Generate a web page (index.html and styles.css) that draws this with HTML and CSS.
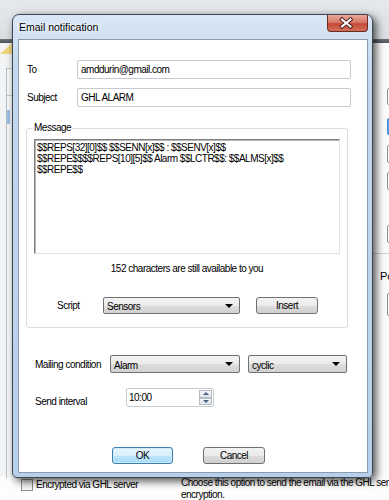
FILE: index.html
```html
<!DOCTYPE html>
<html lang="en">
<head>
    <meta charset="UTF-8">
    <title>Email notification</title>
    <link rel="stylesheet" href="styles.css">
</head>
<body>
    <div class="screen">
        <!-- application behind the dialog -->
        <div class="app">
            <div class="app-top"></div>
            <div class="app-band"></div>
            <div class="app-main">
                <div class="lpane">
                    <span class="tab"></span>
                    <div class="lpanel">
                        <span class="lbox"></span>
                        <span class="lmark"></span>
                    </div>
                </div>
                <div class="rpane">
                    <span class="rbox r1"></span>
                    <span class="rbox blue r2"></span>
                    <span class="rbox r3"></span>
                    <span class="rbox r4"></span>
                    <span class="rbox r5"></span>
                    <span class="rline"></span>
                    <span class="rtext">Po</span>
                    <span class="rbox r6"></span>
                </div>
            </div>
            <div class="app-foot">
                <div class="chk"><span class="chkbox"></span>Encrypted via GHL server</div>
                <div class="hint">Choose this option to send the email via the GHL server with<br>encryption.</div>
            </div>
        </div>

        <!-- the dialog window -->
        <div class="dialog">
            <div class="titlebar">
                <span class="title">Email notification</span>
                <span class="close">
                    <svg width="39" height="16" viewBox="0 0 39 16">
                        <path d="M15 4.5 L23.5 11.5 M23.5 4.5 L15 11.5" stroke="#4a1d18" stroke-width="4" stroke-linecap="square"/>
                        <path d="M15 4.5 L23.5 11.5 M23.5 4.5 L15 11.5" stroke="#fff" stroke-width="2" stroke-linecap="square"/>
                    </svg>
                </span>
            </div>
            <div class="client">
                <div class="field first">
                    <span class="lbl">To</span>
                    <div class="edit">amddurin@gmail.com</div>
                </div>
                <div class="field">
                    <span class="lbl">Subject</span>
                    <div class="edit">GHL ALARM</div>
                </div>

                <fieldset class="group">
                    <legend>Message</legend>
                    <div class="memo">$$REPS[32][0]$$ $$SENN[x]$$ : $$SENV[x]$$<br>$$REPE$$$$REPS[10][5]$$ Alarm $$LCTR$$: $$ALMS[x]$$<br>$$REPE$$</div>
                    <div class="counter">152 characters are still available to you</div>
                    <div class="script-row">
                        <span class="lbl-script">Script</span>
                        <div class="combo w-script"><span>Sensors</span><i class="arrow"></i></div>
                        <span class="btn insert">Insert</span>
                    </div>
                </fieldset>

                <div class="opt-row mail">
                    <span class="lbl-mail">Mailing condition</span>
                    <div class="combo w-alarm"><span>Alarm</span><i class="arrow"></i></div>
                    <div class="combo w-cyclic"><span>cyclic</span><i class="arrow"></i></div>
                </div>
                <div class="opt-row interval">
                    <span class="lbl-int">Send interval</span>
                    <div class="spin">
                        <span class="spin-val">10:00</span>
                        <span class="spin-btns">
                            <span class="sb up"><i></i></span>
                            <span class="sb down"><i></i></span>
                        </span>
                    </div>
                </div>

                <div class="buttons">
                    <span class="btn ok">OK</span>
                    <span class="btn cancel">Cancel</span>
                </div>
            </div>
        </div>
    </div>
</body>
</html>
```

FILE: styles.css
```css
body {
    margin: 0;
    font-family: "Liberation Sans", Arial, sans-serif;
    font-size: 10px;
    letter-spacing: -0.5px;
    color: #000;
}
.screen {
    position: relative;
    width: 389px;
    height: 500px;
    overflow: hidden;
    background: #fcfcfc;
}

/* background application */
.app-top {
    height: 39px;
    background: linear-gradient(#e6e9ec, #dadee2);
}
.app-band {
    height: 4px;
    background: linear-gradient(#6a7077, #50565c);
}
.app-main {
    display: flex;
    height: 433px;
}
.lpane {
    width: 12px;
    background: #f3f4f5;
}
.tab {
    display: block;
    width: 0;
    height: 0;
    border-left: 12px solid transparent;
    border-bottom: 11px solid #f2d77e;
}
.lpanel {
    margin: 2px 0 0 6px;
    height: 410px;
    border-left: 1px solid #b9bec4;
    background: #f8f9fa;
}
.lbox {
    display: block;
    margin-top: 14px;
    width: 5px;
    height: 26px;
    border: 1px solid #c3c7cc;
    border-left: 0;
}
.lmark {
    display: block;
    margin-top: 14px;
    width: 3px;
    height: 14px;
    background: #9cc0e6;
}
.rpane {
    margin-left: auto;
    width: 16px;
    display: flex;
    flex-direction: column;
    background: #fbfbfb;
}
.rbox {
    display: block;
    margin-left: 14px;
    width: 10px;
    height: 15px;
    border: 1px solid #8e8e8e;
    border-radius: 2px;
    background: #fff;
}
.rbox.blue {
    border-color: #3f8fdd;
    background: #5aa2e6;
}
.r1 { margin-top: 45px; }
.r2 { margin-top: 13px; }
.r3 { margin-top: 10px; height: 16px; }
.r4 { margin-top: 9px; height: 16px; }
.r5 { margin-top: 35px; height: 16px; }
.r6 { margin-top: 11px; height: 21px; }
.rline {
    display: block;
    margin-top: 10px;
    height: 1px;
    background: #cfd2d5;
}
.rtext {
    display: block;
    margin: 16px 0 0 7px;
    line-height: 12px;
    font-size: 11px;
    letter-spacing: 0;
}
.app-foot {
    display: flex;
    padding: 1px 0 0 21px;
    background: #fdfdfd;
    line-height: 12px;
}
.chk {
    flex: none;
    display: flex;
    align-items: center;
    width: 160px;
    height: 12px;
    margin-top: 2px;
    white-space: nowrap;
}
.chkbox {
    width: 10px;
    height: 10px;
    margin-right: 3px;
    border: 1px solid #8f8f8f;
    background: linear-gradient(#e6e6e6, #f8f8f8);
}
.hint {
    white-space: nowrap;
}

/* dialog window */
.dialog {
    position: absolute;
    left: 12px;
    top: 14px;
    width: 361px;
    height: 464px;
    box-sizing: border-box;
    border: 1px solid #3e4650;
    border-radius: 7px 7px 5px 5px;
    background: linear-gradient(180deg, #d9e7f6 0%, #c3d8ee 12%, #bcd3ec 60%, #b6cfea 100%);
    box-shadow: 3px 3px 9px rgba(0, 0, 0, 0.7);
}
.titlebar {
    display: flex;
    align-items: center;
    height: 24px;
    padding-left: 6px;
}
.title {
    font-size: 10.5px;
    letter-spacing: 0;
    text-shadow: 0 0 6px #fff, 0 0 3px #fff;
}
.close {
    align-self: flex-start;
    margin-left: auto;
    margin-right: 4px;
    width: 39px;
    height: 16px;
    border: 1px solid #6e2b22;
    border-top: 0;
    border-radius: 0 0 4px 4px;
    background: linear-gradient(#e9a899 0%, #d8796a 45%, #c44a36 55%, #d0705a 100%);
}
.close svg {
    display: block;
    margin-left: -1px;
}
.client {
    margin: 0 4px 0 5px;
    height: 434px;
    box-sizing: border-box;
    border: 1px solid #8c9cae;
    background: #fff;
}
.field {
    display: flex;
    align-items: center;
    margin: 9px 0 0 8px;
}
.field.first {
    margin-top: 20px;
}
.lbl {
    width: 50px;
}
.edit {
    width: 274px;
    height: 19px;
    box-sizing: border-box;
    padding: 0 3px;
    line-height: 17px;
    border: 1px solid #c6cbd1;
    border-radius: 2px;
}

/* message group */
.group {
    width: 322px;
    box-sizing: border-box;
    margin: 15px 0 0 7px;
    padding: 5px 7px 13px;
    border: 1px solid #d5dfe5;
    border-radius: 3px;
}
.group legend {
    margin-left: -1px;
    padding: 0 1px;
    line-height: 12px;
}
.memo {
    height: 115px;
    box-sizing: border-box;
    padding: 2px 2px;
    line-height: 11px;
    border: 1px solid;
    border-color: #7e7e7e #e2e2e2 #e2e2e2 #7e7e7e;
    box-shadow: inset 1px 1px 0 #b7b7b7;
    white-space: nowrap;
}
.counter {
    margin-top: 9px;
    line-height: 12px;
    text-align: center;
}
.script-row {
    display: flex;
    align-items: center;
    margin-top: 22px;
}
.lbl-script {
    width: 46px;
    margin-left: 23px;
}
.w-script { width: 137px; }
.insert {
    width: 62px;
    margin-left: 16px;
}

/* combobox and buttons */
.combo {
    display: flex;
    align-items: center;
    height: 17px;
    box-sizing: border-box;
    padding: 0 6px 0 3px;
    border: 1px solid #707070;
    border-radius: 2px;
    background: linear-gradient(#f3f3f3 0%, #ebebeb 50%, #dddddd 51%, #d2d2d2 100%);
}
.combo span {
    flex: 1;
    padding-top: 2px;
}
.arrow {
    width: 0;
    height: 0;
    border-left: 4px solid transparent;
    border-right: 4px solid transparent;
    border-top: 4px solid #000;
}
.btn {
    display: flex;
    align-items: center;
    justify-content: center;
    height: 17px;
    box-sizing: border-box;
    border: 1px solid #707070;
    border-radius: 3px;
    background: linear-gradient(#f2f2f2 0%, #ebebeb 50%, #dddddd 51%, #cfcfcf 100%);
}
.btn.ok {
    width: 61px;
    border-color: #3c7fb1;
    background: linear-gradient(#eaf6fd 0%, #d9f0fc 50%, #bee6fd 51%, #a7d9f5 100%);
    box-shadow: inset 0 0 0 1px #cfeafa;
}
.btn.cancel {
    width: 62px;
    margin-left: 30px;
}

.opt-row {
    display: flex;
    align-items: center;
    margin-left: 16px;
    white-space: nowrap;
}
.mail {
    margin-top: 27px;
}
.mail .combo {
    height: 18px;
}
.lbl-mail { width: 75px; }
.w-alarm { width: 130px; }
.w-cyclic {
    width: 99px;
    margin-left: 8px;
}
.interval {
    margin-top: 15px;
}
.lbl-int {
    width: 91px;
    padding-top: 8px;
}
.spin {
    display: flex;
    width: 88px;
    height: 19px;
    box-sizing: border-box;
    border: 1px solid #c6cbd1;
    border-radius: 2px;
}
.spin-val {
    flex: 1;
    padding: 3px 0 0 2px;
}
.spin-btns {
    display: flex;
    flex-direction: column;
    width: 13px;
    margin: 1px;
}
.sb {
    flex: 1;
    display: flex;
    align-items: center;
    justify-content: center;
    border: 1px solid #b6bcc3;
    background: linear-gradient(#f4f6f8, #e1e5ea);
}
.up i {
    border-left: 3px solid transparent;
    border-right: 3px solid transparent;
    border-bottom: 3px solid #4d6185;
}
.down i {
    border-left: 3px solid transparent;
    border-right: 3px solid transparent;
    border-top: 3px solid #4d6185;
}
.buttons {
    display: flex;
    margin: 40px 0 0 93px;
}
```
